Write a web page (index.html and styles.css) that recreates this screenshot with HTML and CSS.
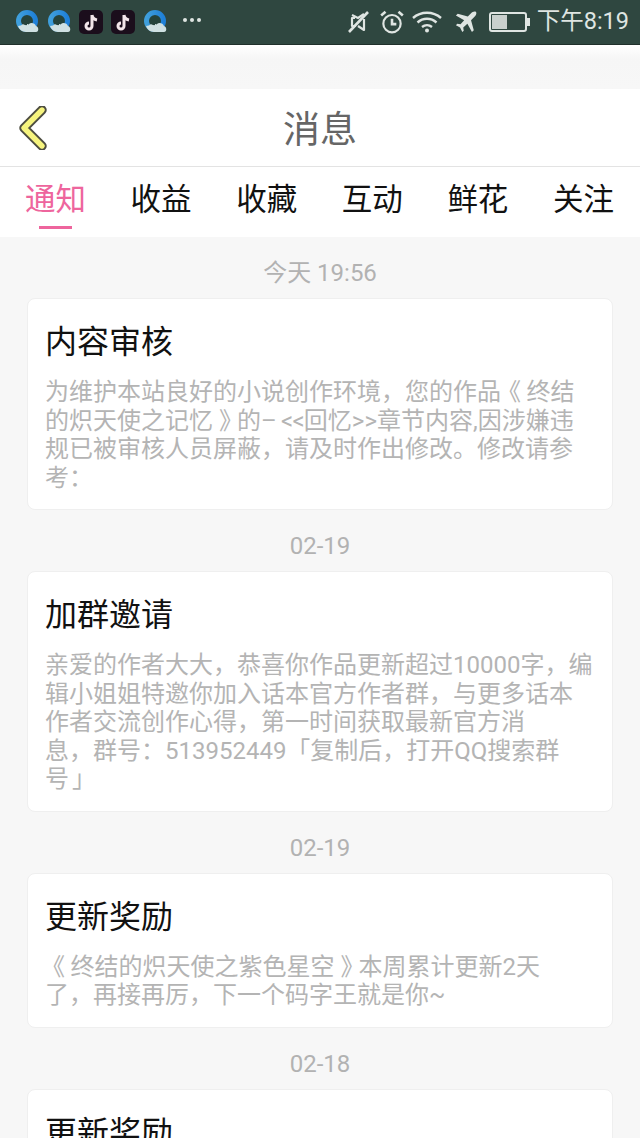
FILE: index.html
```html
<!DOCTYPE html>
<html lang="zh-CN">
<head>
<meta charset="utf-8">
<title>消息</title>
<link rel="stylesheet" href="styles.css">
</head>
<body>
<div class="phone">
  <div class="status">
    <div class="apps">
      <svg class="app" viewBox="0 0 24 24"><use href="#qq"/></svg>
      <svg class="app" viewBox="0 0 24 24"><use href="#qq"/></svg>
      <svg class="app" viewBox="0 0 24 24"><use href="#tt"/></svg>
      <svg class="app" viewBox="0 0 24 24"><use href="#tt"/></svg>
      <svg class="app" viewBox="0 0 24 24"><use href="#qq"/></svg>
      <span class="dots"><i></i><i></i><i></i></span>
    </div>
    <div class="sys">
      <svg class="sys-ic mute" viewBox="0 0 22 24" fill="none" stroke="#dfe5e2" stroke-width="2.200"><path d="M7 8 4 8v8h4M16 9v11l-6-4" stroke-linejoin="round"/><path d="M1 22 20 2" stroke-width="2.600"/><path d="M4 5l6 3 6-4"/></svg>
      <svg class="sys-ic alarm" viewBox="0 0 24 24" fill="none" stroke="#dfe5e2" stroke-width="2"><circle cx="12" cy="13.500" r="8"/><path d="M12 9v5h4M2 6l4-3.500M22 6l-4-3.500" stroke-width="2.400"/></svg>
      <svg class="sys-ic wifi" viewBox="0 0 30 22" fill="none" stroke="#dfe5e2" stroke-width="2.400"><path d="M1 7c8-7 20-7 28 0M5.500 11.500c5.500-5 13.500-5 19 0M10 16c3-2.500 7-2.500 10 0"/><circle cx="15" cy="19.500" r="2" fill="#dfe5e2" stroke="none"/></svg>
      <svg class="sys-ic plane" viewBox="0 0 24 24" fill="#dfe5e2"><path d="M23 1c-2-1-4 0-5.500 1.500L14 6 3 3 1 5l9 5-4 4.500-3.500-.5L1 15.500l4.500 2.500L8 23l1.500-1.500-.5-3.500 4.500-4 5 9 2-2-3-11 3.500-3.500C22.500 5 24 3 23 1z"/></svg>
      <div class="battery"><div class="level"></div></div>
      <span class="clock">下午8:19</span>
    </div>
  </div>
  <div class="gap"></div>
  <header class="head">
    <svg class="back" viewBox="0 0 30 44"><path d="M24 4 6 22l18 18" fill="none" stroke="#4d4d40" stroke-width="9.500" stroke-linecap="round" stroke-linejoin="round"/><path d="M24 4 6 22l18 18" fill="none" stroke="#f6f47e" stroke-width="5.400" stroke-linecap="round" stroke-linejoin="round"/></svg>
    <h1 class="title">消息</h1>
  </header>
  <nav class="tabs">
    <a class="tab active">通知</a>
    <a class="tab">收益</a>
    <a class="tab">收藏</a>
    <a class="tab">互动</a>
    <a class="tab">鲜花</a>
    <a class="tab">关注</a>
  </nav>
  <main class="list">
    <p class="date">今天 19:56</p>
    <article class="card">
      <h2>内容审核</h2>
      <p>为维护本站良好的小说创作环境，您的作品<span class="oq">《</span> 终结的炽天使之记忆 <span class="cq">》</span>的<span class="tight">– &lt;&lt;</span>回忆&gt;&gt;章节内容,因涉嫌违规已被审核人员屏蔽，请及时作出修改。修改请参考：</p>
    </article>
    <p class="date">02-19</p>
    <article class="card">
      <h2>加群邀请</h2>
      <p>亲爱的作者大大，恭喜你作品更新超过10000字，编辑小姐姐特邀你加入话本官方作者群，与更多话本作者交流创作心得，第一时间获取最新官方消<br>息，群号：513952449 <span class="ob">「</span> 复制后，打开QQ搜索群<br>号 <span class="cb">」</span></p>
    </article>
    <p class="date">02-19</p>
    <article class="card">
      <h2>更新奖励</h2>
      <p><span class="oq">《</span> 终结的炽天使之紫色星空 <span class="cq">》</span>本周累计更新2天<br>了，再接再厉，下一个码字王就是你~</p>
    </article>
    <p class="date">02-18</p>
    <article class="card">
      <h2>更新奖励</h2>
    </article>
  </main>
</div>
<svg class="defs" width="0" height="0">
  <defs>
    <linearGradient id="qqb" x1="0" y1="0" x2="1" y2="0">
      <stop offset="0" stop-color="#3f9fdc"/>
      <stop offset="1" stop-color="#1f80d8"/>
    </linearGradient>
    <symbol id="qq" viewBox="0 0 24 24">
      <circle cx="12" cy="11" r="8.500" fill="#25433c" stroke="url(#qqb)" stroke-width="5"/>
      <path d="M3 16c1 3 4 6 8 6h10c3 0 3-5 0-6-1-3-5-4-7-2-2 2-5 1-6 0-1 1-3 2-5 2z" fill="#cfe0e2"/>
    </symbol>
    <symbol id="tt" viewBox="0 0 24 24">
      <rect width="24" height="24" rx="5" fill="#1b0e1c"/>
      <path d="M13 5v11a3 3 0 1 1-3-3M13 5c.5 3 2.500 4.500 5 5" fill="none" stroke="#f3e6ea" stroke-width="3"/>
    </symbol>
  </defs>
</svg>
</body>
</html>
```
FILE: styles.css
```css
* { box-sizing: border-box; margin: 0; padding: 0; }
html, body { background: #f7f7f7; }
body {
  width: 640px;
  height: 1138px;
  overflow: hidden;
  font-family: Roboto, "Noto Sans CJK SC", sans-serif;
}
.phone { display: flex; flex-direction: column; height: 1138px; overflow: hidden; }
.defs { position: absolute; }

.status {
  height: 45px;
  flex: none;
  background: #2f4740;
  border-bottom: 1px solid #20302b;
  display: flex;
  justify-content: space-between;
  align-items: center;
  padding: 0 11px 0 15px;
}
.apps { display: flex; align-items: center; gap: 8px; }
.app { width: 24px; height: 24px; display: block; }
.dots { display: flex; gap: 3px; margin-left: 8px; margin-top: -4px; }
.dots i { width: 4px; height: 4px; border-radius: 50%; background: #dfe5e2; display: block; }
.sys { display: flex; align-items: center; }
.sys-ic { display: block; }
.mute { width: 22px; height: 24px; margin-right: 9px; }
.alarm { width: 26px; height: 26px; margin-right: 7px; }
.wifi { width: 30px; height: 22px; margin-right: 13px; }
.plane { width: 22px; height: 22px; margin-right: 12px; }
.battery {
  width: 38px;
  height: 20px;
  border: 2px solid #dfe5e2;
  border-radius: 3px;
  margin-right: 10px;
  padding: 1px;
  position: relative;
}
.battery::after {
  content: "";
  position: absolute;
  right: -5px;
  top: 4px;
  width: 3px;
  height: 8px;
  background: #dfe5e2;
}
.level { width: 15px; height: 14px; background: #c9d0cd; }
.clock { font-size: 23.500px; color: #dfe5e2; line-height: 1; }

.gap { height: 44px; flex: none; background: linear-gradient(#fff 0, #f6f6f6 14px, #f7f7f7 100%); }

.head {
  height: 78px;
  flex: none;
  background: #fff;
  border-bottom: 1px solid #e3e3e3;
  display: flex;
  align-items: center;
  justify-content: center;
  position: relative;
}
.back { position: absolute; left: 18px; top: 17px; width: 30px; height: 44px; }
.title { font-size: 37px; font-weight: 400; color: #666; line-height: 1; padding-top: 5px; }

.tabs {
  height: 70px;
  flex: none;
  background: #fff;
  display: flex;
  justify-content: space-between;
  padding: 0 26px 0 25px;
}
.tab {
  font-size: 30.500px;
  line-height: 66px;
  color: #111;
  position: relative;
  height: 70px;
}
.tab.active { color: #ee659d; }
.tab.active::after {
  content: "";
  position: absolute;
  left: 14px;
  right: 14px;
  bottom: 8px;
  height: 3px;
  background: #ee659d;
}

.list { padding: 0 27px; flex: 1; }
.date {
  display: flex;
  justify-content: center;
  align-items: flex-start;
  font-size: 24px;
  line-height: 36px;
  height: 61px;
  padding-top: 18px;
  color: #b2b2b2;
}
.card {
  background: #fff;
  border: 1px solid #efefef;
  border-radius: 8px;
  padding: 20px 18px 17px 17px;
}
.card h2 {
  font-size: 32px;
  font-weight: 400;
  line-height: 46px;
  color: #111;
  margin-bottom: 13px;
}
.card p {
  font-size: 24px;
  line-height: 28.500px;
  color: #b4b4b4;
}
.oq { margin-left: -4px; margin-right: -0.500px; }
.cq { margin-right: -6px; }
.ob { margin-left: -6px; margin-right: -6px; }
.cb { margin-left: -3px; }
.tight { letter-spacing: -0.800px; }
```
